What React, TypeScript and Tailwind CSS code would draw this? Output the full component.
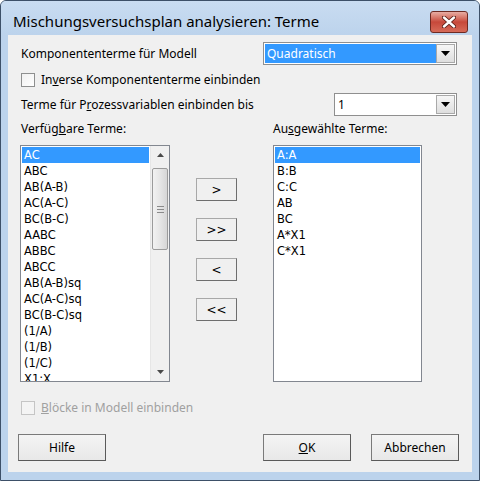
import { ReactNode } from "react";

const UI = { fontFamily: '"Noto Sans", "DejaVu Sans", sans-serif' };
const LIST = { fontFamily: '"DejaVu Sans", "Liberation Sans", sans-serif' };

const AVAILABLE = [
  "AC",
  "ABC",
  "AB(A-B)",
  "AC(A-C)",
  "BC(B-C)",
  "AABC",
  "ABBC",
  "ABCC",
  "AB(A-B)sq",
  "AC(A-C)sq",
  "BC(B-C)sq",
  "(1/A)",
  "(1/B)",
  "(1/C)",
  "X1:X",
];

const SELECTED = ["A:A", "B:B", "C:C", "AB", "BC", "A*X1", "C*X1"];

const DownTriangle = () => (
  <svg width="9" height="5" viewBox="0 0 9 5">
    <path d="M0 0 H9 L4.5 5 Z" fill="#000" />
  </svg>
);

const Combo = ({ value, width, selected }: { value: string; width: string; selected?: boolean }) => (
  <div className={`${width} h-[23px] flex border border-[#8f8f8f] bg-white p-px`}>
    <div
      className={`flex-1 flex items-center pl-[2px] text-[12px] ${
        selected ? "bg-[#3399ff] text-white" : "text-black"
      }`}
    >
      {value}
    </div>
    <div className="w-[19px] flex items-center justify-center bg-gradient-to-b from-[#f6f6f6] to-[#dedede] border border-[#a9a9a9]">
      <DownTriangle />
    </div>
  </div>
);

const CheckBox = ({ disabled }: { disabled?: boolean }) => (
  <div
    className={`w-[14px] h-[14px] border ${
      disabled ? "border-[#c5c5c5] bg-[#f4f4f4]" : "border-[#8e8f8f] bg-gradient-to-br from-[#f0f0f0] to-white"
    }`}
  />
);

const SmallButton = ({ children }: { children: ReactNode }) => (
  <div className="w-[41px] h-[23px] flex items-center justify-center border border-[#a8a8a8] border-r-[#6e6e6e] border-b-[#6e6e6e] bg-[#f0f0f0] text-[12px] text-black" style={LIST}>
    {children}
  </div>
);

const BigButton = ({ children }: { children: ReactNode }) => (
  <div className="w-[88px] h-[27px] flex items-center justify-center border border-[#7a7a7a] border-r-[#5a5a5a] border-b-[#5a5a5a] bg-gradient-to-b from-[#f4f4f4] to-[#e8e8e8] text-[12px] text-black">
    {children}
  </div>
);

const Row = ({ text, selected }: { text: string; selected?: boolean }) => (
  <div
    className={`h-[16px] leading-[16px] pl-[2px] text-[11.5px] whitespace-nowrap ${
      selected ? "bg-[#3399ff] text-white" : "text-black"
    }`}
    style={LIST}
  >
    {text}
  </div>
);

const ScrollBar = () => (
  <div className="w-[19px] h-full flex flex-col bg-[#f0f0f0] border-l border-[#e6e6e6]">
    <div className="h-[18px] flex items-center justify-center">
      <svg width="7" height="4" viewBox="0 0 7 4">
        <path d="M0 4 H7 L3.5 0 Z" fill="#4a4a4a" />
      </svg>
    </div>
    <div className="h-[4px]" />
    <div className="mx-px h-[82px] rounded-[2px] border border-[#9b9b9b] bg-gradient-to-r from-[#f2f2f2] via-[#e6e6e6] to-[#d6d6d6] flex flex-col items-center justify-center gap-[2px]">
      <div className="w-[7px] h-px bg-[#8a8a8a]" />
      <div className="w-[7px] h-px bg-[#8a8a8a]" />
      <div className="w-[7px] h-px bg-[#8a8a8a]" />
    </div>
    <div className="flex-1" />
    <div className="h-[18px] flex items-center justify-center">
      <svg width="7" height="4" viewBox="0 0 7 4">
        <path d="M0 0 H7 L3.5 4 Z" fill="#4a4a4a" />
      </svg>
    </div>
  </div>
);

export default function App() {
  return (
    <div
      className="w-[480px] h-[481px] flex flex-col bg-[#bcd3ec] border border-[#3d5068] rounded-t-[6px] overflow-hidden"
      style={UI}
    >
      <div className="h-[34px] flex items-start bg-gradient-to-b from-[#c9dcf1] to-[#bcd3ec]">
        <div className="pl-[12px] pt-[11px] text-[15px] leading-[18px] text-black">
          Mischungsversuchsplan analysieren: Terme
        </div>
        <div className="flex-1" />
        <div className="mt-[10px] mr-[11px] w-[38px] h-[22px] rounded-[3px] border border-[#6e2a22] bg-gradient-to-b from-[#e7aca3] via-[#c7483a] to-[#d66a58] flex items-center justify-center">
          <svg width="14" height="12" viewBox="0 0 14 12">
            <path d="M2 1.5 L12 10.5 M12 1.5 L2 10.5" stroke="#5a2018" strokeWidth="4.2" strokeLinecap="round" />
            <path d="M2 1.5 L12 10.5 M12 1.5 L2 10.5" stroke="#fff" strokeWidth="2.4" strokeLinecap="round" />
          </svg>
        </div>
      </div>

      <div className="ml-[7px] w-[464px] h-[437px] bg-[#f0f0f0] pl-[13px] pr-[15px] flex flex-col text-[12px] text-black">
        <div className="mt-[7px] h-[23px] flex items-center justify-between">
          <span>Komponententerme für Modell</span>
          <Combo value="Quadratisch" width="w-[194px]" selected />
        </div>

        <div className="mt-[8px] h-[14px] flex items-center gap-[6px]">
          <CheckBox />
          <span>
            In<span className="underline">v</span>erse Komponententerme einbinden
          </span>
        </div>

        <div className="mt-[6px] h-[23px] flex items-center justify-between">
          <span>
            Terme für P<span className="underline">r</span>ozessvariablen einbinden bis
          </span>
          <Combo value="1" width="w-[123px]" />
        </div>

        <div className="mt-[6px] h-[14px] flex items-center">
          <span className="w-[252px]">
            Verfüg<span className="underline">b</span>are Terme:
          </span>
          <span>
            Au<span className="underline">s</span>gewählte Terme:
          </span>
        </div>

        <div className="mt-[9px] h-[237px] flex ml-[-1px]">
          <div className="w-[150px] h-full flex border border-[#828790] bg-white">
            <div className="flex-1 p-px overflow-hidden">
              {AVAILABLE.map((t, i) => (
                <Row key={t} text={t} selected={i === 0} />
              ))}
            </div>
            <ScrollBar />
          </div>

          <div className="ml-[26px] pt-[33px] flex flex-col gap-[17px]">
            <SmallButton>&gt;</SmallButton>
            <SmallButton>&gt;&gt;</SmallButton>
            <SmallButton>&lt;</SmallButton>
            <SmallButton>&lt;&lt;</SmallButton>
          </div>

          <div className="ml-[36px] w-[149px] h-full border border-[#828790] bg-white p-px">
            {SELECTED.map((t, i) => (
              <Row key={t} text={t} selected={i === 0} />
            ))}
          </div>
        </div>

        <div className="mt-[19px] h-[14px] flex items-center gap-[6px] text-[#a0a0a0]">
          <CheckBox disabled />
          <span>
            <span className="underline">B</span>löcke in Modell einbinden
          </span>
        </div>

        <div className="mt-[19px] flex items-center ml-[-3px] mr-[-2px]">
          <BigButton>Hilfe</BigButton>
          <div className="flex-1" />
          <BigButton>
            <span>
              <span className="underline">O</span>K
            </span>
          </BigButton>
          <div className="w-[20px]" />
          <BigButton>Abbrechen</BigButton>
        </div>
      </div>
    </div>
  );
}
